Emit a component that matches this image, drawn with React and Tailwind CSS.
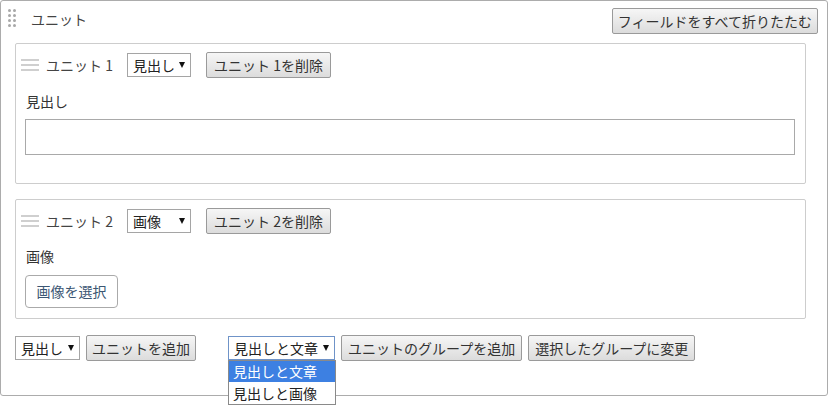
import React from "react";

const font = { fontFamily: '"Noto Sans CJK JP", "Noto Sans", sans-serif' };

function Btn({ children, className = "" }) {
  return (
    <div
      className={
        "h-[26px] px-[7px] flex items-center border border-[#9a9a9a] rounded-[2px] bg-gradient-to-b from-[#f6f6f6] to-[#dcdcdc] text-[14px] text-[#333] whitespace-nowrap " +
        className
      }
    >
      {children}
    </div>
  );
}

function Select({ label, width, focused = false }) {
  return (
    <div
      className={
        "h-[24px] flex items-center justify-between pl-[5px] pr-[5px] bg-white border text-[14px] text-[#222] whitespace-nowrap " +
        (focused ? "border-[#6f93c8]" : "border-[#a5a5a5]")
      }
      style={{ width }}
    >
      <span>{label}</span>
      <span className="w-0 h-0 border-l-[3.5px] border-r-[3.5px] border-t-[6px] border-l-transparent border-r-transparent border-t-[#111]" />
    </div>
  );
}

function Hamburger() {
  return (
    <div className="w-[18px] flex flex-col gap-[3px]">
      <div className="h-[2px] bg-[#cfcfcf]" />
      <div className="h-[2px] bg-[#cfcfcf]" />
      <div className="h-[2px] bg-[#cfcfcf]" />
    </div>
  );
}

function UnitHeader({ n, sel, selW }) {
  return (
    <div className="flex items-center h-[26px] pl-[5px]">
      <Hamburger />
      <span className="ml-[7px] text-[14px] text-[#444] w-[81px]">ユニット {n}</span>
      <Select label={sel} width={selW} />
      <Btn className="ml-[15px]">ユニット {n}を削除</Btn>
    </div>
  );
}

export default function App() {
  return (
    <div className="bg-white w-[829px] h-[406px]" style={font}>
      <div className="relative w-[828px] h-[396px] border border-[#acacac] rounded-[3px]">
        {/* header */}
        <div className="flex items-start h-[42px]">
          <div className="ml-[7px] mt-[8px] grid grid-cols-2 gap-x-[2px] gap-y-[2px]">
            {Array.from({ length: 8 }).map((_, i) => (
              <div key={i} className="w-[3px] h-[3px] rounded-full bg-[#a8a8a8]" />
            ))}
          </div>
          <span className="ml-[15px] mt-[8px] leading-[20px] text-[14px] text-[#444]">ユニット</span>
          <div className="ml-auto mr-[9px] mt-[7px]">
            <Btn className="!px-[5px]">フィールドをすべて折りたたむ</Btn>
          </div>
        </div>

        {/* unit 1 */}
        <div className="ml-[14px] w-[791px] border border-[#cdcdcd] rounded-[2px] pt-[8px] pb-[28px]">
          <UnitHeader n={1} sel="見出し" selW={64} />
          <div className="ml-[10px] mt-[13px] leading-[20px] text-[14px] text-[#333]">見出し</div>
          <div className="ml-[9px] mt-[8px] w-[770px] h-[36px] border border-[#a9a9a9] bg-white" />
        </div>

        {/* unit 2 */}
        <div className="ml-[14px] mt-[15px] w-[791px] border border-[#cdcdcd] rounded-[2px] pt-[8px] pb-[10px]">
          <UnitHeader n={2} sel="画像" selW={64} />
          <div className="ml-[10px] mt-[12px] leading-[20px] text-[14px] text-[#333]">画像</div>
          <div className="ml-[9px] mt-[9px] w-[93px] h-[33px] flex items-center justify-center border border-[#aaaaaa] rounded-[4px] bg-white text-[14px] text-[#3b5673]">
            画像を選択
          </div>
        </div>

        {/* bottom row */}
        <div className="relative flex items-center h-[26px] mt-[16px] ml-[14px]">
          <Select label="見出し" width={65} />
          <Btn className="ml-[6px] !px-[5px]">ユニットを追加</Btn>
          <div className="relative ml-[32px]">
            <Select label="見出しと文章" width={107} focused />
            <div className="absolute left-0 top-[24px] w-[108px] border border-[#8a8a8a] bg-white z-10 text-[14px]">
              <div className="h-[21px] leading-[21px] pl-[4px] bg-[#3d80e2] text-white">見出しと文章</div>
              <div className="h-[22px] leading-[22px] pl-[4px] text-[#222]">見出しと画像</div>
            </div>
          </div>
          <Btn className="ml-[6px] !px-[6px]">ユニットのグループを追加</Btn>
          <Btn className="ml-[6px] !px-[6px]">選択したグループに変更</Btn>
        </div>
      </div>
    </div>
  );
}
